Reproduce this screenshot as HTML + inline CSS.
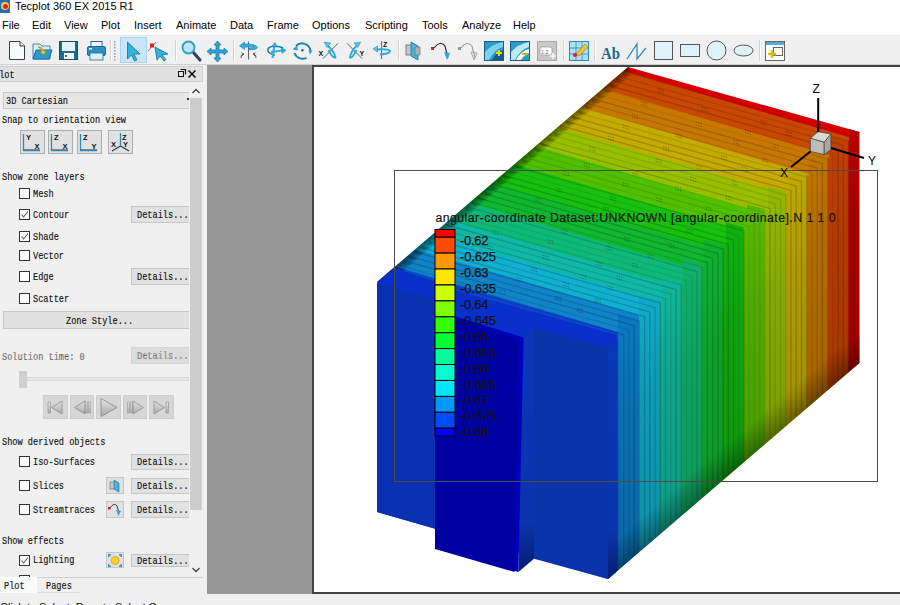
<!DOCTYPE html>
<html><head><meta charset="utf-8">
<style>
*{margin:0;padding:0;box-sizing:border-box}
html,body{width:900px;height:605px;overflow:hidden;background:#f0f0f0;font-family:"Liberation Sans",sans-serif;position:relative}
.a{position:absolute}
#title{left:0;top:0;width:900px;height:15px;background:#fff}
#menu{left:0;top:15px;width:900px;height:20px;background:#fff}
.mi{position:absolute;top:19px;font-size:11px;color:#000;line-height:12px;white-space:pre}
#tb{left:0;top:35px;width:900px;height:30px;background:#f0f0f0;border-top:1px solid #e6e6e6}
#tbline{left:0;top:64px;width:900px;height:1px;background:#d0d0d0}
#gray{left:207px;top:65px;width:106px;height:529px;background:#979797}
#frame{left:312px;top:65px;width:600px;height:529px;background:#fff;border:2px solid #444}
.pt{position:absolute;font-family:"Liberation Mono",monospace;font-size:10.5px;line-height:12px;color:#111;white-space:pre;transform:scaleX(0.82);transform-origin:0 0;-webkit-text-stroke:0.15px #111}
.cb{position:absolute;left:19px;width:11px;height:11px;border:1px solid #333;background:#fff}
.btn{position:absolute;background:#e1e1e1;border:1px solid #c4c4c4}
.det{position:absolute;left:131px;width:60px;height:17px;background:#e1e1e1;border:1px solid #c8c8c8}
.det span{position:absolute;left:5px;top:3px}
</style></head><body>
<div id="title" class="a"></div>
<div class="a" style="left:0;top:0;width:10px;height:13px;background:#2a6bb5"></div>
<div class="a" style="left:1px;top:2px;width:8px;height:8px;border-radius:50%;background:#f5d040"></div>
<div class="a" style="left:3px;top:4px;width:5px;height:5px;border-radius:50%;background:#e02020"></div>
<div class="mi" style="left:15px;top:0px;font-size:11px">Tecplot 360 EX 2015 R1</div>
<div id="menu" class="a"></div>
<div class="mi" style="left:2px">File</div>
<div class="mi" style="left:32px">Edit</div>
<div class="mi" style="left:64px">View</div>
<div class="mi" style="left:101px">Plot</div>
<div class="mi" style="left:134px">Insert</div>
<div class="mi" style="left:176px">Animate</div>
<div class="mi" style="left:230px">Data</div>
<div class="mi" style="left:267px">Frame</div>
<div class="mi" style="left:312px">Options</div>
<div class="mi" style="left:365px">Scripting</div>
<div class="mi" style="left:422px">Tools</div>
<div class="mi" style="left:462px">Analyze</div>
<div class="mi" style="left:513px">Help</div>
<div id="tb" class="a"></div>
<div id="tbline" class="a"></div>
<!-- TOOLBAR ICONS -->
<svg class="a" style="left:0;top:0" width="900" height="65" viewBox="0 0 900 65"><path d="M9.5 41.5 H20 L24.5 46 V59.5 H9.5 Z" fill="#f7fbfd" stroke="#3c3c3c"/><path d="M20 41.5 V46 H24.5" fill="#e6e6e6" stroke="#3c3c3c"/>
<path d="M33 44 H40 L42 46 H50 V59 H33 Z" fill="#d9eef7" stroke="#3d8ab8"/><path d="M33 59 L36 50 H52 L49 59 Z" fill="#2f9ad0" stroke="#1d6c9c"/><path d="M38 47 Q42 46 44 51 L46 50 L44 55 L40 52 L42 51 Q41 48 38 47 Z" fill="#f3c726" stroke="#a08010" stroke-width="0.6"/>
<rect x="59.5" y="41.5" width="18" height="18" fill="#1c6b94" stroke="#134e6e"/><rect x="62" y="42" width="13" height="9" fill="#e6f4f8"/><rect x="64" y="53" width="10" height="6" fill="#fff"/><rect x="65" y="55" width="2" height="2" fill="#1c6b94"/>
<rect x="91" y="41.5" width="11" height="6" fill="#fff" stroke="#1c6b94"/><rect x="87.5" y="46.5" width="18" height="9" rx="1.5" fill="#2a8fc4" stroke="#1c6b94"/><rect x="90" y="53" width="13" height="7" fill="#dfeef3" stroke="#1c6b94" stroke-width="0.8"/><rect x="89" y="48" width="3" height="1.5" fill="#fff"/>
<line x1="110.5" y1="40" x2="110.5" y2="61" stroke="#d4d4d4"/><line x1="111.5" y1="40" x2="111.5" y2="61" stroke="#fff"/>
<rect x="114" y="41" width="1.5" height="1.5" fill="#9a9a9a"/>
<rect x="114" y="44" width="1.5" height="1.5" fill="#9a9a9a"/>
<rect x="114" y="47" width="1.5" height="1.5" fill="#9a9a9a"/>
<rect x="114" y="50" width="1.5" height="1.5" fill="#9a9a9a"/>
<rect x="114" y="53" width="1.5" height="1.5" fill="#9a9a9a"/>
<rect x="114" y="56" width="1.5" height="1.5" fill="#9a9a9a"/>
<rect x="114" y="59" width="1.5" height="1.5" fill="#9a9a9a"/>
<rect x="120.5" y="37.5" width="26" height="25" fill="#cce4f7" stroke="#a8d2f4"/>
<path d="M127.5 42 L127.5 59 L131.5 55 L134.5 61 L137 60 L134 54 L140 54 Z" fill="#2fb4dc" stroke="#1d6f8e" stroke-width="0.8"/>
<line x1="148" y1="51" x2="156" y2="42" stroke="#555" stroke-width="0.8"/><rect x="150" y="43.5" width="4" height="4" fill="#e02020"/>
<path d="M155 47 L157 60 L160 56 L164 61 L166 59.5 L162 55 L168 54 Z" fill="#2fb4dc" stroke="#1d6f8e" stroke-width="0.8"/>
<line x1="175.5" y1="40" x2="175.5" y2="61" stroke="#d4d4d4"/><line x1="176.5" y1="40" x2="176.5" y2="61" stroke="#fff"/>
<line x1="193" y1="52" x2="200" y2="60" stroke="#2c4060" stroke-width="3" stroke-linecap="round"/><circle cx="188.5" cy="47.5" r="6" fill="#bfe8f6" stroke="#2a9ccc" stroke-width="1.8"/>
<path d="M217.5 41 L221 45 H219 V50 H224 V48 L228 51.5 L224 55 V53 H219 V58 H221 L217.5 62 L214 58 H216 V53 H211 V55 L207 51.5 L211 48 V50 H216 V45 H214 Z" fill="#2aa8d8" stroke="#1a6c92" stroke-width="0.7"/>
<line x1="233.5" y1="40" x2="233.5" y2="61" stroke="#d4d4d4"/><line x1="234.5" y1="40" x2="234.5" y2="61" stroke="#fff"/>
<line x1="248.5" y1="41.5" x2="248.5" y2="59.5" stroke="#666" stroke-width="1.1"/>
<path d="M239.5 45.8 L244.5 42 V44 Q255 43.5 257.5 47.2 Q257 50 249 49.8 V48 Q254 47.8 254.3 47 Q252 46.3 244.5 47.2 V49.5 Z" fill="#34b0e0" stroke="#1d7fae" stroke-width="0.6"/>
<path d="M241 58 Q240.5 55 243.5 54 M241.5 52.8 L243.8 54 L242 55.8 M256 58 Q256.5 55 253.5 54 M255.5 52.8 L253.2 54 L255 55.8" fill="none" stroke="#333" stroke-width="0.9"/>
<path d="M283 48 Q279 45.5 272 46.5 Q267 47.5 268 51 Q269 54 275 55" fill="none" stroke="#1d7fae" stroke-width="1.6"/>
<path d="M272.5 58 L274.5 46" stroke="#34b0e0" stroke-width="2.2"/><path d="M271.8 46.5 L275 42.5 L277.3 47 Z" fill="#34b0e0" stroke="#1d7fae" stroke-width="0.5"/>
<path d="M271 52 L282 50.5" stroke="#34b0e0" stroke-width="2.2"/><path d="M281.5 47.5 L286 50.3 L282 53.5 Z" fill="#34b0e0" stroke="#1d7fae" stroke-width="0.5"/>
<path d="M296 46 A8.5 8.5 0 0 1 310.5 50.5 M306.5 57.8 A8.5 8.5 0 0 1 294.5 53" fill="none" stroke="#1d7fae" stroke-width="1.9"/>
<path d="M292.5 49.5 L297 45.5 L298 50.5 Z M308.5 50 L312.5 50.5 L310 54.5 Z" fill="#2aa0d0"/>
<circle cx="302.4" cy="50.2" r="1.2" fill="#1d5f80"/>
<line x1="323" y1="58.5" x2="338" y2="43.3" stroke="#555" stroke-width="0.9"/>
<path d="M328 46 Q334 51 335.5 57.5 Q334 58.5 331 54.5 Q329.5 52 328.5 50" fill="none" stroke="#2aa8d8" stroke-width="1.8"/><path d="M324.2 42.2 L330.8 43 L327 47.5 Z" fill="#5cc4ec" stroke="#1d7fae" stroke-width="0.5"/>
<text x="318.5" y="55.5" font-family="Liberation Sans" font-weight="bold" font-size="7" fill="#111">X</text>
<line x1="347" y1="43.3" x2="362" y2="58.5" stroke="#555" stroke-width="0.9"/>
<path d="M356.5 46 Q351 51 350 57.5 Q351.5 58.5 354 54.5 Q355.5 52 356.5 50" fill="none" stroke="#2aa8d8" stroke-width="1.8"/><path d="M360.6 42.2 L354 43 L357.8 47.5 Z" fill="#5cc4ec" stroke="#1d7fae" stroke-width="0.5"/>
<text x="359.5" y="55.5" font-family="Liberation Sans" font-weight="bold" font-size="7" fill="#111">Y</text>
<line x1="381.6" y1="41" x2="381.6" y2="59" stroke="#666" stroke-width="1"/>
<path d="M376.5 49.5 Q388 48.5 390 51 Q389.5 54 380 54.5" fill="none" stroke="#2aa8d8" stroke-width="1.9"/><path d="M373 48.8 L377.5 45.8 L377.5 52 Z" fill="#5cc4ec" stroke="#1d7fae" stroke-width="0.5"/>
<text x="383" y="47" font-family="Liberation Sans" font-weight="bold" font-size="7" fill="#111">Z</text>
<line x1="398.5" y1="40" x2="398.5" y2="61" stroke="#d4d4d4"/><line x1="399.5" y1="40" x2="399.5" y2="61" stroke="#fff"/>
<rect x="406" y="45" width="8" height="10" fill="#c8c8c8" stroke="#666" stroke-width="0.8"/><path d="M411 42 L418 46 V60 L411 56 Z" fill="#49b3e0" stroke="#1a6c92" stroke-width="0.8"/><rect x="415" y="47" width="5" height="8" fill="#b0b0b0" stroke="#666" stroke-width="0.6"/>
<rect x="431" y="47" width="3" height="3" fill="#e02020"/><path d="M434 48 Q440 40 445 46 L448 58" fill="none" stroke="#333" stroke-width="1.2"/><path d="M444 52 L450 53 L447 60 Z" fill="#2aa8d8"/>
<rect x="458" y="47" width="3" height="3" fill="#999"/><path d="M461 48 Q467 40 472 46 L475 58" fill="none" stroke="#999" stroke-width="1.1"/><path d="M471 52 L477 53 L474 60 Z" fill="none" stroke="#aaa"/>
<rect x="484.5" y="41.5" width="19" height="19" fill="#2a9ccc" stroke="#1a5c82"/><path d="M485 52 Q492 44 503 42 V47 Q495 49 489 60 H485 Z" fill="#7fd0ee"/><path d="M492 60 Q496 52 503 50 V60 Z" fill="#0d5f8a"/><path d="M496 53 H502 M499 50 V56" stroke="#f4d000" stroke-width="2"/>
<rect x="510.5" y="41.5" width="19" height="19" fill="#2a9ccc" stroke="#1a5c82"/><path d="M511 52 Q518 44 529 42 V47 Q521 49 515 60 H511 Z" fill="#bfe8f6"/><path d="M516 60 Q522 50 529 49 V53 Q524 55 521 60 Z" fill="#fff"/><path d="M522 54 H528" stroke="#c4c000" stroke-width="2"/>
<rect x="537.5" y="41.5" width="19" height="19" fill="#c8c8c8" stroke="#a8a8a8"/><rect x="540" y="47" width="12" height="8" rx="2" fill="#fff" stroke="#888" stroke-width="0.6"/><text x="541" y="53.5" font-family="Liberation Sans" font-size="5.5" fill="#777">1.2</text><path d="M550 56 H556 M553 53 V59" stroke="#eee" stroke-width="2"/>
<line x1="563.5" y1="40" x2="563.5" y2="61" stroke="#d4d4d4"/><line x1="564.5" y1="40" x2="564.5" y2="61" stroke="#fff"/>
<rect x="569.5" y="41.5" width="19" height="19" fill="#aee0f5" stroke="#2a8cbc"/><path d="M569.5 48 H588.5 M569.5 54 H588.5 M576 41.5 V60.5 M582 41.5 V60.5" stroke="#2a8cbc" stroke-width="0.8"/><path d="M576 54 L585 44 L588 47 L579 56 Z" fill="#f3c726" stroke="#a08010" stroke-width="0.6"/><circle cx="575" cy="55" r="2" fill="#e02020"/>
<line x1="594.5" y1="40" x2="594.5" y2="61" stroke="#d4d4d4"/><line x1="595.5" y1="40" x2="595.5" y2="61" stroke="#fff"/>
<text x="601" y="59" font-family="Liberation Serif" font-weight="bold" font-size="17" fill="#1e6a8a" textLength="19" lengthAdjust="spacingAndGlyphs">Ab</text>
<path d="M627 59 L637 44 V59 L646 48" fill="none" stroke="#2a8cbc" stroke-width="1.3"/>
<rect x="654.5" y="41.5" width="18" height="18" fill="#dff1fa" stroke="#555"/>
<rect x="680.5" y="44.5" width="19" height="12" fill="#dff1fa" stroke="#555"/>
<circle cx="716.5" cy="50.5" r="9.5" fill="#dff1fa" stroke="#555"/>
<ellipse cx="743.5" cy="50.5" rx="9.5" ry="5.5" fill="#dff1fa" stroke="#555"/>
<line x1="759.5" y1="40" x2="759.5" y2="61" stroke="#d4d4d4"/><line x1="760.5" y1="40" x2="760.5" y2="61" stroke="#fff"/>
<rect x="765.5" y="41.5" width="19" height="19" fill="#fff" stroke="#666"/><rect x="766" y="42" width="18" height="3" fill="#5aa8d8"/><rect x="773.5" y="47.5" width="9" height="8" fill="#fff" stroke="#666"/><path d="M768 54 H776 M772 50 V58" stroke="#f4d000" stroke-width="2.4"/><path d="M768 54 H776 M772 50 V58" stroke="#a08010" stroke-width="0.5" fill="none"/></svg>
<!-- LEFT PANEL -->
<div class="a" style="left:0px;top:65px;width:207px;height:528px;background:#f0f0f0"></div>
<div class="a" style="left:0px;top:66px;width:203px;height:16px;background:#e1e1e1;border:1px solid #cfcfcf;border-left:none"></div>
<div class="pt" style="left:-6px;top:68.5px;color:#111;">Plot</div>
<svg class="a" style="left:174px;top:68px" width="24" height="12"><rect x="4.5" y="3.5" width="5" height="5" fill="none" stroke="#111"/><path d="M6.5 1.5 H11.5 V6.5" fill="none" stroke="#111" stroke-width="1.2"/><path d="M14.5 2.5 L21.5 9.5 M21.5 2.5 L14.5 9.5" stroke="#111" stroke-width="1.6"/></svg>
<div class="a" style="left:3px;top:92px;width:186px;height:17px;background:#e6e6e6;border:1px solid #cacaca;border-right:none"></div>
<div class="pt" style="left:6px;top:95.0px;color:#111;">3D Cartesian</div>
<div class="a" style="left:187px;top:98px;width:2px;height:2px;background:#333"></div>
<div class="a" style="left:189px;top:82px;width:14px;height:495px;background:#f0f0f0"></div>
<div class="a" style="left:190px;top:98px;width:12px;height:412px;background:#cdcdcd"></div>
<svg class="a" style="left:190px;top:86px" width="12" height="10"><path d="M2.5 7 L6 3.5 L9.5 7" fill="none" stroke="#444" stroke-width="1.4"/></svg>
<svg class="a" style="left:190px;top:565px" width="12" height="10"><path d="M2.5 3 L6 6.5 L9.5 3" fill="none" stroke="#444" stroke-width="1.3"/></svg>
<div class="pt" style="left:2px;top:113.5px;color:#111;">Snap to orientation view</div>
<div class="a" style="left:20px;top:130px;width:25px;height:24px;background:#e1e1e1;border:1px solid #adadad"></div>
<svg class="a" style="left:20px;top:130px" width="25" height="24"><path d="M3.5 4 V20.5 H20" fill="none" stroke="#2a8cbc" stroke-width="1.3"/><path d="M3.5 19.5 H20" stroke="#555" stroke-width="0.6"/><text x="6" y="10" font-family="Liberation Sans" font-weight="bold" font-size="7.5" fill="#111">Y</text><text x="14.5" y="19" font-family="Liberation Sans" font-weight="bold" font-size="7.5" fill="#111">X</text></svg>
<div class="a" style="left:48px;top:130px;width:25px;height:24px;background:#e1e1e1;border:1px solid #adadad"></div>
<svg class="a" style="left:48px;top:130px" width="25" height="24"><path d="M3.5 4 V20.5 H20" fill="none" stroke="#2a8cbc" stroke-width="1.3"/><path d="M3.5 19.5 H20" stroke="#555" stroke-width="0.6"/><text x="6" y="10" font-family="Liberation Sans" font-weight="bold" font-size="7.5" fill="#111">Z</text><text x="14.5" y="19" font-family="Liberation Sans" font-weight="bold" font-size="7.5" fill="#111">X</text></svg>
<div class="a" style="left:76.5px;top:130px;width:25px;height:24px;background:#e1e1e1;border:1px solid #adadad"></div>
<svg class="a" style="left:76.5px;top:130px" width="25" height="24"><path d="M3.5 4 V20.5 H20" fill="none" stroke="#2a8cbc" stroke-width="1.3"/><path d="M3.5 19.5 H20" stroke="#555" stroke-width="0.6"/><text x="6" y="10" font-family="Liberation Sans" font-weight="bold" font-size="7.5" fill="#111">Z</text><text x="14.5" y="19" font-family="Liberation Sans" font-weight="bold" font-size="7.5" fill="#111">Y</text></svg>
<div class="a" style="left:108px;top:130px;width:25px;height:24px;background:#e1e1e1;border:1px solid #adadad"></div>
<svg class="a" style="left:108px;top:130px" width="25" height="24"><path d="M12.5 3 V16 M12.5 16 L4 21 M12.5 16 L21 21" fill="none" stroke="#333" stroke-width="1.1"/><path d="M12.5 3 V16" stroke="#2a8cbc" stroke-width="1.2"/><text x="14" y="10" font-family="Liberation Sans" font-weight="bold" font-size="7.5" fill="#111">Z</text><text x="3" y="17" font-family="Liberation Sans" font-weight="bold" font-size="7.5" fill="#111">X</text><text x="15" y="17" font-family="Liberation Sans" font-weight="bold" font-size="7.5" fill="#111">Y</text></svg>
<div class="pt" style="left:2px;top:171.0px;color:#111;">Show zone layers</div>
<div class="cb" style="top:188px"></div>
<div class="pt" style="left:33px;top:188.0px;color:#111;">Mesh</div>
<div class="cb" style="top:209px"></div>
<svg class="a" style="left:19px;top:209px" width="11" height="11"><path d="M2.5 5.5 L4.5 8 L9 2.5" fill="none" stroke="#555" stroke-width="1.1"/></svg>
<div class="pt" style="left:33px;top:209.0px;color:#111;">Contour</div>
<div class="a" style="left:131px;top:206px;width:58px;height:17px;background:#e1e1e1;border:1px solid #c6c6c6;border-right:none"></div>
<div class="pt" style="left:137px;top:209.0px;color:#111;">Details...</div>
<div class="cb" style="top:230.5px"></div>
<svg class="a" style="left:19px;top:230.5px" width="11" height="11"><path d="M2.5 5.5 L4.5 8 L9 2.5" fill="none" stroke="#555" stroke-width="1.1"/></svg>
<div class="pt" style="left:33px;top:230.5px;color:#111;">Shade</div>
<div class="cb" style="top:249.5px"></div>
<div class="pt" style="left:33px;top:249.5px;color:#111;">Vector</div>
<div class="cb" style="top:271px"></div>
<div class="pt" style="left:33px;top:271.0px;color:#111;">Edge</div>
<div class="a" style="left:131px;top:268px;width:58px;height:17px;background:#e1e1e1;border:1px solid #c6c6c6;border-right:none"></div>
<div class="pt" style="left:137px;top:271.0px;color:#111;">Details...</div>
<div class="cb" style="top:292.5px"></div>
<div class="pt" style="left:33px;top:292.5px;color:#111;">Scatter</div>
<div class="a" style="left:3px;top:311px;width:186px;height:18px;background:#e1e1e1;border:1px solid #c6c6c6;border-right:none"></div>
<div class="pt" style="left:66px;top:314.5px;color:#111;">Zone Style...</div>
<div class="pt" style="left:2px;top:350.5px;color:#8a8a8a;">Solution time: 0</div>
<div class="a" style="left:131px;top:346.5px;width:58px;height:17px;background:#dcdcdc;border:1px solid #d6d6d6;border-right:none"></div>
<div class="pt" style="left:137px;top:349.5px;color:#a0a0a0;">Details...</div>
<div class="a" style="left:27px;top:377px;width:162px;height:4px;background:#e8e8e8;border:1px solid #d8d8d8"></div>
<div class="a" style="left:19px;top:370.5px;width:8px;height:17.5px;background:#d0d0d0"></div>
<div class="a" style="left:43px;top:395px;width:24.5px;height:24px;background:#d6d6d6;border:1px solid #cdcdcd"></div>
<svg class="a" style="left:43px;top:395px" width="25" height="24"><defs><linearGradient id="mg" x1="0" y1="0" x2="0" y2="1"><stop offset="0" stop-color="#e4e4e4"/><stop offset="1" stop-color="#a8a8a8"/></linearGradient></defs><path d="M5 7 H7.5 V18 H5 Z" fill="url(#mg)" stroke="#9a9a9a" stroke-width="0.7"/><path d="M19 6 L8.5 12.5 L19 19 Z" fill="url(#mg)" stroke="#8e8e8e" stroke-width="0.8"/></svg>
<div class="a" style="left:69.5px;top:395px;width:24.5px;height:24px;background:#d6d6d6;border:1px solid #cdcdcd"></div>
<svg class="a" style="left:69.5px;top:395px" width="25" height="24"><defs><linearGradient id="mg" x1="0" y1="0" x2="0" y2="1"><stop offset="0" stop-color="#e4e4e4"/><stop offset="1" stop-color="#a8a8a8"/></linearGradient></defs><path d="M15 6 L4.5 12.5 L15 19 Z" fill="url(#mg)" stroke="#8e8e8e" stroke-width="0.8"/><path d="M15.5 7 H17.5 V18 H15.5 Z M18.5 7 H20.5 V18 H18.5 Z" fill="url(#mg)" stroke="#9a9a9a" stroke-width="0.6"/></svg>
<div class="a" style="left:96px;top:395px;width:24.5px;height:24px;background:#d6d6d6;border:1px solid #cdcdcd"></div>
<svg class="a" style="left:96px;top:395px" width="25" height="24"><defs><linearGradient id="mg" x1="0" y1="0" x2="0" y2="1"><stop offset="0" stop-color="#e4e4e4"/><stop offset="1" stop-color="#a8a8a8"/></linearGradient></defs><path d="M5 3.5 L21 12.5 L5 21.5 Z" fill="url(#mg)" stroke="#8e8e8e" stroke-width="0.9"/></svg>
<div class="a" style="left:122.5px;top:395px;width:24.5px;height:24px;background:#d6d6d6;border:1px solid #cdcdcd"></div>
<svg class="a" style="left:122.5px;top:395px" width="25" height="24"><defs><linearGradient id="mg" x1="0" y1="0" x2="0" y2="1"><stop offset="0" stop-color="#e4e4e4"/><stop offset="1" stop-color="#a8a8a8"/></linearGradient></defs><path d="M4.5 7 H6.5 V18 H4.5 Z M7.5 7 H9.5 V18 H7.5 Z" fill="url(#mg)" stroke="#9a9a9a" stroke-width="0.6"/><path d="M10 6 L20.5 12.5 L10 19 Z" fill="url(#mg)" stroke="#8e8e8e" stroke-width="0.8"/></svg>
<div class="a" style="left:149px;top:395px;width:24.5px;height:24px;background:#d6d6d6;border:1px solid #cdcdcd"></div>
<svg class="a" style="left:149px;top:395px" width="25" height="24"><defs><linearGradient id="mg" x1="0" y1="0" x2="0" y2="1"><stop offset="0" stop-color="#e4e4e4"/><stop offset="1" stop-color="#a8a8a8"/></linearGradient></defs><path d="M5 6 L15.5 12.5 L5 19 Z" fill="url(#mg)" stroke="#8e8e8e" stroke-width="0.8"/><path d="M17 7 H19.5 V18 H17 Z" fill="url(#mg)" stroke="#9a9a9a" stroke-width="0.7"/></svg>
<div class="pt" style="left:2px;top:436.0px;color:#111;">Show derived objects</div>
<div class="cb" style="top:455.5px"></div>
<div class="pt" style="left:33px;top:455.5px;color:#111;">Iso-Surfaces</div>
<div class="a" style="left:131px;top:453.5px;width:58px;height:16px;background:#e1e1e1;border:1px solid #c6c6c6;border-right:none"></div>
<div class="pt" style="left:137px;top:456.0px;color:#111;">Details...</div>
<div class="cb" style="top:479.5px"></div>
<div class="pt" style="left:33px;top:479.5px;color:#111;">Slices</div>
<div class="a" style="left:131px;top:477.5px;width:58px;height:16px;background:#e1e1e1;border:1px solid #c6c6c6;border-right:none"></div>
<div class="pt" style="left:137px;top:480.0px;color:#111;">Details...</div>
<div class="a" style="left:106px;top:477px;width:18px;height:16.5px;background:#e1e1e1;border:1px solid #c6c6c6"></div>
<svg class="a" style="left:106px;top:477px" width="18" height="17"><rect x="4" y="5" width="6" height="7" fill="#c8c8c8" stroke="#666" stroke-width="0.6"/><path d="M8 3 L13 6 V15 L8 12 Z" fill="#49b3e0" stroke="#1a6c92" stroke-width="0.6"/></svg>
<div class="cb" style="top:503.5px"></div>
<div class="pt" style="left:33px;top:503.5px;color:#111;">Streamtraces</div>
<div class="a" style="left:131px;top:501px;width:58px;height:16.5px;background:#e1e1e1;border:1px solid #c6c6c6;border-right:none"></div>
<div class="pt" style="left:137px;top:503.75px;color:#111;">Details...</div>
<div class="a" style="left:106px;top:501px;width:18px;height:16.5px;background:#e1e1e1;border:1px solid #c6c6c6"></div>
<svg class="a" style="left:106px;top:501px" width="18" height="17"><rect x="2" y="6" width="2.5" height="2.5" fill="#e02020"/><path d="M4 7 Q8 1 11 5 L13 12" fill="none" stroke="#333" stroke-width="0.9"/><path d="M10 9 L15 10 L12.5 15 Z" fill="#2aa8d8"/></svg>
<div class="pt" style="left:2px;top:534.5px;color:#111;">Show effects</div>
<div class="cb" style="top:554.5px"></div>
<svg class="a" style="left:19px;top:554.5px" width="11" height="11"><path d="M2.5 5.5 L4.5 8 L9 2.5" fill="none" stroke="#555" stroke-width="1.1"/></svg>
<div class="pt" style="left:33px;top:554.0px;color:#111;">Lighting</div>
<div class="a" style="left:131px;top:554px;width:58px;height:12.5px;background:#e1e1e1;border:1px solid #c6c6c6;border-right:none"></div>
<div class="pt" style="left:137px;top:554.75px;color:#111;">Details...</div>
<div class="a" style="left:106px;top:551.5px;width:18px;height:16.5px;background:#e1e1e1;border:1px solid #c6c6c6"></div>
<svg class="a" style="left:106px;top:551.5px" width="18" height="17"><circle cx="9" cy="8.5" r="4" fill="#f6d030" stroke="#e0a010" stroke-width="0.8"/><path d="M2 2 H5 V3.5 H3.5 V5 H2 Z M16 2 H13 V3.5 H14.5 V5 H16 Z M2 15 H5 V13.5 H3.5 V12 H2 Z M16 15 H13 V13.5 H14.5 V12 H16 Z" fill="#2a9ccc"/></svg>
<div class="a" style="left:19px;top:575px;width:11px;height:2px;border:1px solid #333;border-bottom:none;background:#fff"></div>
<div class="a" style="left:0px;top:577px;width:203px;height:1px;background:#cfcfcf"></div>
<div class="a" style="left:0px;top:577px;width:37px;height:16px;background:#fbfbfb"></div>
<div class="pt" style="left:4px;top:580.0px;color:#111;">Plot</div>
<div class="pt" style="left:46px;top:579.5px;color:#111;">Pages</div>
<div class="a" style="left:37px;top:592px;width:43px;height:1px;background:#d8d8d8"></div>
<div class="a" style="left:0;top:600.5px;font-size:11px;color:#111;white-space:pre;line-height:12px">Click to Select; Drag to Select G</div>
<div id="gray" class="a"></div>
<div id="frame" class="a"></div>
<!-- PLOT -->
<svg id="plot" class="a" style="left:0;top:0" width="900" height="605" viewBox="0 0 900 605">
<defs>
<linearGradient id="gt" gradientUnits="userSpaceOnUse" x1="628" y1="67" x2="549.6" y2="333.7"><stop offset="0" stop-color="#d40000"/><stop offset="0.016" stop-color="#d40000"/><stop offset="0.02" stop-color="#c84800"/><stop offset="0.098" stop-color="#c84800"/><stop offset="0.102" stop-color="#c87800"/><stop offset="0.184" stop-color="#c87800"/><stop offset="0.188" stop-color="#c4ac00"/><stop offset="0.278" stop-color="#c4ac00"/><stop offset="0.282" stop-color="#98c000"/><stop offset="0.365" stop-color="#98c000"/><stop offset="0.369" stop-color="#50c000"/><stop offset="0.448" stop-color="#50c000"/><stop offset="0.452" stop-color="#18c010"/><stop offset="0.538" stop-color="#18c010"/><stop offset="0.542" stop-color="#10b830"/><stop offset="0.628" stop-color="#10b830"/><stop offset="0.632" stop-color="#10b878"/><stop offset="0.708" stop-color="#10b878"/><stop offset="0.712" stop-color="#10b8a8"/><stop offset="0.778" stop-color="#10b8a8"/><stop offset="0.782" stop-color="#10b0d0"/><stop offset="0.843" stop-color="#10b0d0"/><stop offset="0.847" stop-color="#1084c8"/><stop offset="0.923" stop-color="#1084c8"/><stop offset="0.927" stop-color="#0a48cc"/><stop offset="1" stop-color="#0a48cc"/></linearGradient>
<linearGradient id="gr" gradientUnits="userSpaceOnUse" x1="859" y1="0" x2="608" y2="0"><stop offset="0" stop-color="#b80000"/><stop offset="0.0397" stop-color="#b80000"/><stop offset="0.0437" stop-color="#c04000"/><stop offset="0.1232" stop-color="#c04000"/><stop offset="0.1272" stop-color="#c07400"/><stop offset="0.2067" stop-color="#c07400"/><stop offset="0.2107" stop-color="#bca800"/><stop offset="0.2902" stop-color="#bca800"/><stop offset="0.2942" stop-color="#90b800"/><stop offset="0.3737" stop-color="#90b800"/><stop offset="0.3777" stop-color="#58b800"/><stop offset="0.4572" stop-color="#58b800"/><stop offset="0.4612" stop-color="#10b010"/><stop offset="0.5407" stop-color="#10b010"/><stop offset="0.5447" stop-color="#10b030"/><stop offset="0.6242" stop-color="#10b030"/><stop offset="0.6282" stop-color="#10b068"/><stop offset="0.7077" stop-color="#10b068"/><stop offset="0.7117" stop-color="#10b498"/><stop offset="0.7912" stop-color="#10b498"/><stop offset="0.7952" stop-color="#10a8c4"/><stop offset="0.8747" stop-color="#10a8c4"/><stop offset="0.8787" stop-color="#0a78c0"/><stop offset="0.9582" stop-color="#0a78c0"/><stop offset="0.9622" stop-color="#0a40c0"/><stop offset="1" stop-color="#0a40c0"/></linearGradient>
<linearGradient id="gshade" x1="0" y1="0" x2="0" y2="1"><stop offset="0" stop-color="#000" stop-opacity="0"/><stop offset="0.7" stop-color="#000" stop-opacity="0"/><stop offset="1" stop-color="#000" stop-opacity="0.35"/></linearGradient>
<clipPath id="fc"><rect x="314" y="66" width="586" height="526"/></clipPath>
</defs>
<g clip-path="url(#fc)">
<polygon points="628.0,67.0 859.5,132.0 608.0,347.0 377.0,282.0" fill="url(#gt)"/>
<linearGradient id="gbev" gradientUnits="userSpaceOnUse" x1="628" y1="67" x2="633.9" y2="73.8"><stop offset="0" stop-color="#000" stop-opacity="0.45"/><stop offset="1" stop-color="#000" stop-opacity="0"/></linearGradient>
<polygon points="628.0,67.0 633.9,73.8 382.9,288.8 377.0,282.0" fill="url(#gbev)"/>
<polygon points="621.7,72.4 631.7,75.2 624.2,76.9" fill="#000" fill-opacity="0.18"/>
<polygon points="615.5,77.8 625.5,80.6 618.0,82.3" fill="#000" fill-opacity="0.18"/>
<polygon points="609.2,83.2 619.2,86.0 611.7,87.7" fill="#000" fill-opacity="0.18"/>
<polygon points="602.9,88.6 612.9,91.4 605.4,93.1" fill="#000" fill-opacity="0.18"/>
<polygon points="596.6,94.0 606.6,96.8 599.1,98.5" fill="#000" fill-opacity="0.18"/>
<polygon points="590.4,99.4 600.4,102.2 592.9,103.9" fill="#000" fill-opacity="0.18"/>
<polygon points="584.1,104.8 594.1,107.6 586.6,109.3" fill="#000" fill-opacity="0.18"/>
<polygon points="577.8,110.2 587.8,113.0 580.3,114.7" fill="#000" fill-opacity="0.18"/>
<polygon points="571.5,115.6 581.5,118.4 574.0,120.1" fill="#000" fill-opacity="0.18"/>
<polygon points="565.2,121.0 575.2,123.8 567.8,125.5" fill="#000" fill-opacity="0.18"/>
<polygon points="559.0,126.4 569.0,129.2 561.5,130.9" fill="#000" fill-opacity="0.18"/>
<polygon points="552.7,131.8 562.7,134.6 555.2,136.3" fill="#000" fill-opacity="0.18"/>
<polygon points="546.4,137.2 556.4,140.0 548.9,141.7" fill="#000" fill-opacity="0.18"/>
<polygon points="540.1,142.6 550.1,145.4 542.6,147.1" fill="#000" fill-opacity="0.18"/>
<polygon points="533.9,148.0 543.9,150.8 536.4,152.5" fill="#000" fill-opacity="0.18"/>
<polygon points="527.6,153.4 537.6,156.2 530.1,157.9" fill="#000" fill-opacity="0.18"/>
<polygon points="521.3,158.8 531.3,161.6 523.8,163.3" fill="#000" fill-opacity="0.18"/>
<polygon points="515.0,164.2 525.0,167.0 517.5,168.7" fill="#000" fill-opacity="0.18"/>
<polygon points="508.8,169.6 518.8,172.4 511.3,174.1" fill="#000" fill-opacity="0.18"/>
<polygon points="502.5,175.0 512.5,177.8 505.0,179.5" fill="#000" fill-opacity="0.18"/>
<polygon points="496.2,180.4 506.2,183.2 498.7,184.9" fill="#000" fill-opacity="0.18"/>
<polygon points="489.9,185.8 499.9,188.6 492.4,190.3" fill="#000" fill-opacity="0.18"/>
<polygon points="483.7,191.2 493.7,194.0 486.2,195.7" fill="#000" fill-opacity="0.18"/>
<polygon points="477.4,196.6 487.4,199.4 479.9,201.1" fill="#000" fill-opacity="0.18"/>
<polygon points="471.1,202.0 481.1,204.8 473.6,206.5" fill="#000" fill-opacity="0.18"/>
<polygon points="464.9,207.4 474.9,210.2 467.4,211.9" fill="#000" fill-opacity="0.18"/>
<polygon points="458.6,212.8 468.6,215.6 461.1,217.3" fill="#000" fill-opacity="0.18"/>
<polygon points="452.3,218.2 462.3,221.0 454.8,222.7" fill="#000" fill-opacity="0.18"/>
<polygon points="446.0,223.6 456.0,226.4 448.5,228.1" fill="#000" fill-opacity="0.18"/>
<polygon points="439.8,229.0 449.8,231.8 442.2,233.5" fill="#000" fill-opacity="0.18"/>
<polygon points="433.5,234.4 443.5,237.2 436.0,238.9" fill="#000" fill-opacity="0.18"/>
<polygon points="427.2,239.8 437.2,242.6 429.7,244.3" fill="#000" fill-opacity="0.18"/>
<polygon points="420.9,245.2 430.9,248.0 423.4,249.7" fill="#000" fill-opacity="0.18"/>
<polygon points="414.6,250.6 424.6,253.4 417.1,255.1" fill="#000" fill-opacity="0.18"/>
<polygon points="408.4,256.0 418.4,258.8 410.9,260.5" fill="#000" fill-opacity="0.18"/>
<polygon points="402.1,261.4 412.1,264.2 404.6,265.9" fill="#000" fill-opacity="0.18"/>
<polygon points="395.8,266.8 405.8,269.6 398.3,271.3" fill="#000" fill-opacity="0.18"/>
<polygon points="389.6,272.2 399.6,275.0 392.1,276.7" fill="#000" fill-opacity="0.18"/>
<polygon points="383.3,277.6 393.3,280.4 385.8,282.1" fill="#000" fill-opacity="0.18"/>
<polygon points="859.5,132.0 849.0,129.0 849.0,141.0 829.5,135.5 829.5,157.6 808.5,151.7 808.5,175.6 789.0,170.1 789.0,192.3 768.0,186.4 768.0,210.2 747.0,204.3 747.0,228.2 726.0,222.3 726.0,246.1 703.5,239.8 703.5,265.4 682.5,259.5 682.5,283.3 661.5,277.4 661.5,301.3 639.0,294.9 639.0,320.5 618.0,314.6 618.0,338.5 608.0,335.6 608.0,347.0 608.0,579.0 859.5,363.0" fill="url(#gr)"/>
<linearGradient id="gsh2" gradientUnits="userSpaceOnUse" x1="859.5" y1="132" x2="973" y2="264"><stop offset="0" stop-color="#000" stop-opacity="0"/><stop offset="0.35" stop-color="#000" stop-opacity="0.08"/><stop offset="0.86" stop-color="#000" stop-opacity="0.12"/><stop offset="1" stop-color="#000" stop-opacity="0.42"/></linearGradient>
<polygon points="859.5,132.0 849.0,129.0 849.0,141.0 829.5,135.5 829.5,157.6 808.5,151.7 808.5,175.6 789.0,170.1 789.0,192.3 768.0,186.4 768.0,210.2 747.0,204.3 747.0,228.2 726.0,222.3 726.0,246.1 703.5,239.8 703.5,265.4 682.5,259.5 682.5,283.3 661.5,277.4 661.5,301.3 639.0,294.9 639.0,320.5 618.0,314.6 618.0,338.5 608.0,335.6 608.0,347.0 608.0,579.0 859.5,363.0" fill="url(#gsh2)"/>
<polyline points="622.8,71.5 853.8,136.5 853.8,366.5" fill="none" stroke="#000" stroke-opacity="0.1" stroke-width="1.4"/>
<polyline points="617.5,76.0 848.5,141.0 848.5,371.0" fill="none" stroke="#000" stroke-opacity="0.1" stroke-width="1.4"/>
<polyline points="612.3,80.5 843.3,145.5 843.3,375.5" fill="none" stroke="#000" stroke-opacity="0.14" stroke-width="1.4"/>
<polyline points="607.1,85.0 838.1,150.0 838.1,380.0" fill="none" stroke="#000" stroke-opacity="0.18" stroke-width="1.4"/>
<polyline points="601.9,89.5 832.9,154.5 832.9,384.5" fill="none" stroke="#000" stroke-opacity="0.07" stroke-width="1.4"/>
<polyline points="596.6,94.0 827.6,159.0 827.6,389.0" fill="none" stroke="#000" stroke-opacity="0.07" stroke-width="1.4"/>
<polyline points="591.4,98.5 822.4,163.5 822.4,393.5" fill="none" stroke="#000" stroke-opacity="0.18" stroke-width="1.4"/>
<polyline points="586.2,103.0 817.2,168.0 817.2,398.0" fill="none" stroke="#000" stroke-opacity="0.14" stroke-width="1.4"/>
<polyline points="580.9,107.5 811.9,172.5 811.9,402.5" fill="none" stroke="#000" stroke-opacity="0.1" stroke-width="1.4"/>
<polyline points="575.7,112.0 806.7,177.0 806.7,407.0" fill="none" stroke="#000" stroke-opacity="0.1" stroke-width="1.4"/>
<polyline points="570.5,116.5 801.5,181.5 801.5,411.5" fill="none" stroke="#000" stroke-opacity="0.18" stroke-width="1.4"/>
<polyline points="565.2,121.0 796.2,186.0 796.2,416.0" fill="none" stroke="#000" stroke-opacity="0.18" stroke-width="1.4"/>
<polyline points="560.0,125.5 791.0,190.5 791.0,420.5" fill="none" stroke="#000" stroke-opacity="0.18" stroke-width="1.4"/>
<polyline points="554.8,130.0 785.8,195.0 785.8,425.0" fill="none" stroke="#000" stroke-opacity="0.1" stroke-width="1.4"/>
<polyline points="549.6,134.5 780.6,199.5 780.6,429.5" fill="none" stroke="#000" stroke-opacity="0.1" stroke-width="1.4"/>
<polyline points="544.3,139.0 775.3,204.0 775.3,434.0" fill="none" stroke="#000" stroke-opacity="0.1" stroke-width="1.4"/>
<polyline points="539.1,143.5 770.1,208.5 770.1,438.5" fill="none" stroke="#000" stroke-opacity="0.18" stroke-width="1.4"/>
<polyline points="533.9,148.0 764.9,213.0 764.9,443.0" fill="none" stroke="#000" stroke-opacity="0.07" stroke-width="1.4"/>
<polyline points="528.6,152.5 759.6,217.5 759.6,447.5" fill="none" stroke="#000" stroke-opacity="0.07" stroke-width="1.4"/>
<polyline points="523.4,157.0 754.4,222.0 754.4,452.0" fill="none" stroke="#000" stroke-opacity="0.1" stroke-width="1.4"/>
<polyline points="518.2,161.5 749.2,226.5 749.2,456.5" fill="none" stroke="#000" stroke-opacity="0.07" stroke-width="1.4"/>
<polyline points="513.0,166.0 744.0,231.0 744.0,461.0" fill="none" stroke="#000" stroke-opacity="0.14" stroke-width="1.4"/>
<polyline points="507.7,170.5 738.7,235.5 738.7,465.5" fill="none" stroke="#000" stroke-opacity="0.07" stroke-width="1.4"/>
<polyline points="502.5,175.0 733.5,240.0 733.5,470.0" fill="none" stroke="#000" stroke-opacity="0.14" stroke-width="1.4"/>
<polyline points="497.3,179.5 728.3,244.5 728.3,474.5" fill="none" stroke="#000" stroke-opacity="0.18" stroke-width="1.4"/>
<polyline points="492.0,184.0 723.0,249.0 723.0,479.0" fill="none" stroke="#000" stroke-opacity="0.18" stroke-width="1.4"/>
<polyline points="486.8,188.5 717.8,253.5 717.8,483.5" fill="none" stroke="#000" stroke-opacity="0.18" stroke-width="1.4"/>
<polyline points="481.6,193.0 712.6,258.0 712.6,488.0" fill="none" stroke="#000" stroke-opacity="0.18" stroke-width="1.4"/>
<polyline points="476.4,197.5 707.4,262.5 707.4,492.5" fill="none" stroke="#000" stroke-opacity="0.18" stroke-width="1.4"/>
<polyline points="471.1,202.0 702.1,267.0 702.1,497.0" fill="none" stroke="#000" stroke-opacity="0.1" stroke-width="1.4"/>
<polyline points="465.9,206.5 696.9,271.5 696.9,501.5" fill="none" stroke="#000" stroke-opacity="0.14" stroke-width="1.4"/>
<polyline points="460.7,211.0 691.7,276.0 691.7,506.0" fill="none" stroke="#000" stroke-opacity="0.07" stroke-width="1.4"/>
<polyline points="455.4,215.5 686.4,280.5 686.4,510.5" fill="none" stroke="#000" stroke-opacity="0.07" stroke-width="1.4"/>
<polyline points="450.2,220.0 681.2,285.0 681.2,515.0" fill="none" stroke="#000" stroke-opacity="0.1" stroke-width="1.4"/>
<polyline points="445.0,224.5 676.0,289.5 676.0,519.5" fill="none" stroke="#000" stroke-opacity="0.18" stroke-width="1.4"/>
<polyline points="439.8,229.0 670.8,294.0 670.8,524.0" fill="none" stroke="#000" stroke-opacity="0.1" stroke-width="1.4"/>
<polyline points="434.5,233.5 665.5,298.5 665.5,528.5" fill="none" stroke="#000" stroke-opacity="0.14" stroke-width="1.4"/>
<polyline points="429.3,238.0 660.3,303.0 660.3,533.0" fill="none" stroke="#000" stroke-opacity="0.18" stroke-width="1.4"/>
<polyline points="424.1,242.5 655.1,307.5 655.1,537.5" fill="none" stroke="#000" stroke-opacity="0.14" stroke-width="1.4"/>
<polyline points="418.8,247.0 649.8,312.0 649.8,542.0" fill="none" stroke="#000" stroke-opacity="0.18" stroke-width="1.4"/>
<polyline points="413.6,251.5 644.6,316.5 644.6,546.5" fill="none" stroke="#000" stroke-opacity="0.18" stroke-width="1.4"/>
<polyline points="408.4,256.0 639.4,321.0 639.4,551.0" fill="none" stroke="#000" stroke-opacity="0.14" stroke-width="1.4"/>
<polyline points="403.1,260.5 634.1,325.5 634.1,555.5" fill="none" stroke="#000" stroke-opacity="0.18" stroke-width="1.4"/>
<polyline points="397.9,265.0 628.9,330.0 628.9,560.0" fill="none" stroke="#000" stroke-opacity="0.1" stroke-width="1.4"/>
<polyline points="392.7,269.5 623.7,334.5 623.7,564.5" fill="none" stroke="#000" stroke-opacity="0.14" stroke-width="1.4"/>
<polyline points="387.5,274.0 618.5,339.0 618.5,569.0" fill="none" stroke="#000" stroke-opacity="0.07" stroke-width="1.4"/>
<polyline points="382.2,278.5 613.2,343.5 613.2,573.5" fill="none" stroke="#000" stroke-opacity="0.14" stroke-width="1.4"/>
<path d="M657.7 88.7 l6.5 1.8" stroke="#000" stroke-opacity="0.32" stroke-width="1" stroke-dasharray="1.3 1.1" fill="none"/>
<path d="M657.7 91.5 l6.5 1.8" stroke="#000" stroke-opacity="0.32" stroke-width="1" stroke-dasharray="1.3 1.1" fill="none"/>
<path d="M641.2 101.7 l6.5 1.8" stroke="#000" stroke-opacity="0.32" stroke-width="1" stroke-dasharray="1.3 1.1" fill="none"/>
<path d="M641.2 104.5 l6.5 1.8" stroke="#000" stroke-opacity="0.32" stroke-width="1" stroke-dasharray="1.3 1.1" fill="none"/>
<path d="M632.0 114.2 l6.5 1.8" stroke="#000" stroke-opacity="0.32" stroke-width="1" stroke-dasharray="1.3 1.1" fill="none"/>
<path d="M632.0 117.0 l6.5 1.8" stroke="#000" stroke-opacity="0.32" stroke-width="1" stroke-dasharray="1.3 1.1" fill="none"/>
<path d="M622.6 124.6 l6.5 1.8" stroke="#000" stroke-opacity="0.32" stroke-width="1" stroke-dasharray="1.3 1.1" fill="none"/>
<path d="M622.6 127.4 l6.5 1.8" stroke="#000" stroke-opacity="0.32" stroke-width="1" stroke-dasharray="1.3 1.1" fill="none"/>
<path d="M607.8 136.1 l6.5 1.8" stroke="#000" stroke-opacity="0.32" stroke-width="1" stroke-dasharray="1.3 1.1" fill="none"/>
<path d="M607.8 138.9 l6.5 1.8" stroke="#000" stroke-opacity="0.32" stroke-width="1" stroke-dasharray="1.3 1.1" fill="none"/>
<path d="M589.1 146.7 l6.5 1.8" stroke="#000" stroke-opacity="0.32" stroke-width="1" stroke-dasharray="1.3 1.1" fill="none"/>
<path d="M589.1 149.5 l6.5 1.8" stroke="#000" stroke-opacity="0.32" stroke-width="1" stroke-dasharray="1.3 1.1" fill="none"/>
<path d="M583.7 163.0 l6.5 1.8" stroke="#000" stroke-opacity="0.32" stroke-width="1" stroke-dasharray="1.3 1.1" fill="none"/>
<path d="M583.7 165.8 l6.5 1.8" stroke="#000" stroke-opacity="0.32" stroke-width="1" stroke-dasharray="1.3 1.1" fill="none"/>
<path d="M563.1 171.3 l6.5 1.8" stroke="#000" stroke-opacity="0.32" stroke-width="1" stroke-dasharray="1.3 1.1" fill="none"/>
<path d="M563.1 174.1 l6.5 1.8" stroke="#000" stroke-opacity="0.32" stroke-width="1" stroke-dasharray="1.3 1.1" fill="none"/>
<path d="M556.8 188.1 l6.5 1.8" stroke="#000" stroke-opacity="0.32" stroke-width="1" stroke-dasharray="1.3 1.1" fill="none"/>
<path d="M556.8 190.9 l6.5 1.8" stroke="#000" stroke-opacity="0.32" stroke-width="1" stroke-dasharray="1.3 1.1" fill="none"/>
<path d="M535.6 197.7 l6.5 1.8" stroke="#000" stroke-opacity="0.32" stroke-width="1" stroke-dasharray="1.3 1.1" fill="none"/>
<path d="M535.6 200.5 l6.5 1.8" stroke="#000" stroke-opacity="0.32" stroke-width="1" stroke-dasharray="1.3 1.1" fill="none"/>
<path d="M492.5 230.3 l6.5 1.8" stroke="#000" stroke-opacity="0.32" stroke-width="1" stroke-dasharray="1.3 1.1" fill="none"/>
<path d="M492.5 233.1 l6.5 1.8" stroke="#000" stroke-opacity="0.32" stroke-width="1" stroke-dasharray="1.3 1.1" fill="none"/>
<path d="M487.5 245.6 l6.5 1.8" stroke="#000" stroke-opacity="0.32" stroke-width="1" stroke-dasharray="1.3 1.1" fill="none"/>
<path d="M487.5 248.4 l6.5 1.8" stroke="#000" stroke-opacity="0.32" stroke-width="1" stroke-dasharray="1.3 1.1" fill="none"/>
<path d="M471.1 256.1 l6.5 1.8" stroke="#000" stroke-opacity="0.32" stroke-width="1" stroke-dasharray="1.3 1.1" fill="none"/>
<path d="M471.1 258.9 l6.5 1.8" stroke="#000" stroke-opacity="0.32" stroke-width="1" stroke-dasharray="1.3 1.1" fill="none"/>
<path d="M452.1 269.1 l6.5 1.8" stroke="#000" stroke-opacity="0.32" stroke-width="1" stroke-dasharray="1.3 1.1" fill="none"/>
<path d="M452.1 271.9 l6.5 1.8" stroke="#000" stroke-opacity="0.32" stroke-width="1" stroke-dasharray="1.3 1.1" fill="none"/>
<path d="M701.8 107.3 l6.5 1.8" stroke="#000" stroke-opacity="0.32" stroke-width="1" stroke-dasharray="1.3 1.1" fill="none"/>
<path d="M701.8 110.1 l6.5 1.8" stroke="#000" stroke-opacity="0.32" stroke-width="1" stroke-dasharray="1.3 1.1" fill="none"/>
<path d="M695.9 122.2 l6.5 1.8" stroke="#000" stroke-opacity="0.32" stroke-width="1" stroke-dasharray="1.3 1.1" fill="none"/>
<path d="M695.9 125.0 l6.5 1.8" stroke="#000" stroke-opacity="0.32" stroke-width="1" stroke-dasharray="1.3 1.1" fill="none"/>
<path d="M675.9 133.7 l6.5 1.8" stroke="#000" stroke-opacity="0.32" stroke-width="1" stroke-dasharray="1.3 1.1" fill="none"/>
<path d="M675.9 136.5 l6.5 1.8" stroke="#000" stroke-opacity="0.32" stroke-width="1" stroke-dasharray="1.3 1.1" fill="none"/>
<path d="M663.2 146.8 l6.5 1.8" stroke="#000" stroke-opacity="0.32" stroke-width="1" stroke-dasharray="1.3 1.1" fill="none"/>
<path d="M663.2 149.6 l6.5 1.8" stroke="#000" stroke-opacity="0.32" stroke-width="1" stroke-dasharray="1.3 1.1" fill="none"/>
<path d="M655.6 158.7 l6.5 1.8" stroke="#000" stroke-opacity="0.32" stroke-width="1" stroke-dasharray="1.3 1.1" fill="none"/>
<path d="M655.6 161.5 l6.5 1.8" stroke="#000" stroke-opacity="0.32" stroke-width="1" stroke-dasharray="1.3 1.1" fill="none"/>
<path d="M632.1 170.2 l6.5 1.8" stroke="#000" stroke-opacity="0.32" stroke-width="1" stroke-dasharray="1.3 1.1" fill="none"/>
<path d="M632.1 173.0 l6.5 1.8" stroke="#000" stroke-opacity="0.32" stroke-width="1" stroke-dasharray="1.3 1.1" fill="none"/>
<path d="M622.8 182.6 l6.5 1.8" stroke="#000" stroke-opacity="0.32" stroke-width="1" stroke-dasharray="1.3 1.1" fill="none"/>
<path d="M622.8 185.4 l6.5 1.8" stroke="#000" stroke-opacity="0.32" stroke-width="1" stroke-dasharray="1.3 1.1" fill="none"/>
<path d="M610.4 196.6 l6.5 1.8" stroke="#000" stroke-opacity="0.32" stroke-width="1" stroke-dasharray="1.3 1.1" fill="none"/>
<path d="M610.4 199.4 l6.5 1.8" stroke="#000" stroke-opacity="0.32" stroke-width="1" stroke-dasharray="1.3 1.1" fill="none"/>
<path d="M603.0 206.9 l6.5 1.8" stroke="#000" stroke-opacity="0.32" stroke-width="1" stroke-dasharray="1.3 1.1" fill="none"/>
<path d="M603.0 209.7 l6.5 1.8" stroke="#000" stroke-opacity="0.32" stroke-width="1" stroke-dasharray="1.3 1.1" fill="none"/>
<path d="M561.5 229.5 l6.5 1.8" stroke="#000" stroke-opacity="0.32" stroke-width="1" stroke-dasharray="1.3 1.1" fill="none"/>
<path d="M561.5 232.3 l6.5 1.8" stroke="#000" stroke-opacity="0.32" stroke-width="1" stroke-dasharray="1.3 1.1" fill="none"/>
<path d="M547.5 239.8 l6.5 1.8" stroke="#000" stroke-opacity="0.32" stroke-width="1" stroke-dasharray="1.3 1.1" fill="none"/>
<path d="M547.5 242.6 l6.5 1.8" stroke="#000" stroke-opacity="0.32" stroke-width="1" stroke-dasharray="1.3 1.1" fill="none"/>
<path d="M542.9 255.3 l6.5 1.8" stroke="#000" stroke-opacity="0.32" stroke-width="1" stroke-dasharray="1.3 1.1" fill="none"/>
<path d="M542.9 258.1 l6.5 1.8" stroke="#000" stroke-opacity="0.32" stroke-width="1" stroke-dasharray="1.3 1.1" fill="none"/>
<path d="M531.1 267.2 l6.5 1.8" stroke="#000" stroke-opacity="0.32" stroke-width="1" stroke-dasharray="1.3 1.1" fill="none"/>
<path d="M531.1 270.0 l6.5 1.8" stroke="#000" stroke-opacity="0.32" stroke-width="1" stroke-dasharray="1.3 1.1" fill="none"/>
<path d="M516.1 277.2 l6.5 1.8" stroke="#000" stroke-opacity="0.32" stroke-width="1" stroke-dasharray="1.3 1.1" fill="none"/>
<path d="M516.1 280.0 l6.5 1.8" stroke="#000" stroke-opacity="0.32" stroke-width="1" stroke-dasharray="1.3 1.1" fill="none"/>
<path d="M499.3 289.9 l6.5 1.8" stroke="#000" stroke-opacity="0.32" stroke-width="1" stroke-dasharray="1.3 1.1" fill="none"/>
<path d="M499.3 292.7 l6.5 1.8" stroke="#000" stroke-opacity="0.32" stroke-width="1" stroke-dasharray="1.3 1.1" fill="none"/>
<path d="M760.8 120.7 l6.5 1.8" stroke="#000" stroke-opacity="0.32" stroke-width="1" stroke-dasharray="1.3 1.1" fill="none"/>
<path d="M760.8 123.5 l6.5 1.8" stroke="#000" stroke-opacity="0.32" stroke-width="1" stroke-dasharray="1.3 1.1" fill="none"/>
<path d="M745.0 129.9 l6.5 1.8" stroke="#000" stroke-opacity="0.32" stroke-width="1" stroke-dasharray="1.3 1.1" fill="none"/>
<path d="M745.0 132.7 l6.5 1.8" stroke="#000" stroke-opacity="0.32" stroke-width="1" stroke-dasharray="1.3 1.1" fill="none"/>
<path d="M733.7 140.1 l6.5 1.8" stroke="#000" stroke-opacity="0.32" stroke-width="1" stroke-dasharray="1.3 1.1" fill="none"/>
<path d="M733.7 142.9 l6.5 1.8" stroke="#000" stroke-opacity="0.32" stroke-width="1" stroke-dasharray="1.3 1.1" fill="none"/>
<path d="M721.0 155.6 l6.5 1.8" stroke="#000" stroke-opacity="0.32" stroke-width="1" stroke-dasharray="1.3 1.1" fill="none"/>
<path d="M721.0 158.4 l6.5 1.8" stroke="#000" stroke-opacity="0.32" stroke-width="1" stroke-dasharray="1.3 1.1" fill="none"/>
<path d="M696.5 165.5 l6.5 1.8" stroke="#000" stroke-opacity="0.32" stroke-width="1" stroke-dasharray="1.3 1.1" fill="none"/>
<path d="M696.5 168.3 l6.5 1.8" stroke="#000" stroke-opacity="0.32" stroke-width="1" stroke-dasharray="1.3 1.1" fill="none"/>
<path d="M690.2 177.0 l6.5 1.8" stroke="#000" stroke-opacity="0.32" stroke-width="1" stroke-dasharray="1.3 1.1" fill="none"/>
<path d="M690.2 179.8 l6.5 1.8" stroke="#000" stroke-opacity="0.32" stroke-width="1" stroke-dasharray="1.3 1.1" fill="none"/>
<path d="M675.4 186.5 l6.5 1.8" stroke="#000" stroke-opacity="0.32" stroke-width="1" stroke-dasharray="1.3 1.1" fill="none"/>
<path d="M675.4 189.3 l6.5 1.8" stroke="#000" stroke-opacity="0.32" stroke-width="1" stroke-dasharray="1.3 1.1" fill="none"/>
<path d="M656.1 197.7 l6.5 1.8" stroke="#000" stroke-opacity="0.32" stroke-width="1" stroke-dasharray="1.3 1.1" fill="none"/>
<path d="M656.1 200.5 l6.5 1.8" stroke="#000" stroke-opacity="0.32" stroke-width="1" stroke-dasharray="1.3 1.1" fill="none"/>
<path d="M624.0 237.2 l6.5 1.8" stroke="#000" stroke-opacity="0.32" stroke-width="1" stroke-dasharray="1.3 1.1" fill="none"/>
<path d="M624.0 240.0 l6.5 1.8" stroke="#000" stroke-opacity="0.32" stroke-width="1" stroke-dasharray="1.3 1.1" fill="none"/>
<path d="M605.9 246.1 l6.5 1.8" stroke="#000" stroke-opacity="0.32" stroke-width="1" stroke-dasharray="1.3 1.1" fill="none"/>
<path d="M605.9 248.9 l6.5 1.8" stroke="#000" stroke-opacity="0.32" stroke-width="1" stroke-dasharray="1.3 1.1" fill="none"/>
<path d="M595.8 261.7 l6.5 1.8" stroke="#000" stroke-opacity="0.32" stroke-width="1" stroke-dasharray="1.3 1.1" fill="none"/>
<path d="M595.8 264.5 l6.5 1.8" stroke="#000" stroke-opacity="0.32" stroke-width="1" stroke-dasharray="1.3 1.1" fill="none"/>
<path d="M580.3 274.7 l6.5 1.8" stroke="#000" stroke-opacity="0.32" stroke-width="1" stroke-dasharray="1.3 1.1" fill="none"/>
<path d="M580.3 277.5 l6.5 1.8" stroke="#000" stroke-opacity="0.32" stroke-width="1" stroke-dasharray="1.3 1.1" fill="none"/>
<path d="M563.0 282.5 l6.5 1.8" stroke="#000" stroke-opacity="0.32" stroke-width="1" stroke-dasharray="1.3 1.1" fill="none"/>
<path d="M563.0 285.3 l6.5 1.8" stroke="#000" stroke-opacity="0.32" stroke-width="1" stroke-dasharray="1.3 1.1" fill="none"/>
<path d="M555.3 296.5 l6.5 1.8" stroke="#000" stroke-opacity="0.32" stroke-width="1" stroke-dasharray="1.3 1.1" fill="none"/>
<path d="M555.3 299.3 l6.5 1.8" stroke="#000" stroke-opacity="0.32" stroke-width="1" stroke-dasharray="1.3 1.1" fill="none"/>
<path d="M786.1 131.6 l6.5 1.8" stroke="#000" stroke-opacity="0.32" stroke-width="1" stroke-dasharray="1.3 1.1" fill="none"/>
<path d="M786.1 134.4 l6.5 1.8" stroke="#000" stroke-opacity="0.32" stroke-width="1" stroke-dasharray="1.3 1.1" fill="none"/>
<path d="M772.7 144.0 l6.5 1.8" stroke="#000" stroke-opacity="0.32" stroke-width="1" stroke-dasharray="1.3 1.1" fill="none"/>
<path d="M772.7 146.8 l6.5 1.8" stroke="#000" stroke-opacity="0.32" stroke-width="1" stroke-dasharray="1.3 1.1" fill="none"/>
<path d="M762.6 158.4 l6.5 1.8" stroke="#000" stroke-opacity="0.32" stroke-width="1" stroke-dasharray="1.3 1.1" fill="none"/>
<path d="M762.6 161.2 l6.5 1.8" stroke="#000" stroke-opacity="0.32" stroke-width="1" stroke-dasharray="1.3 1.1" fill="none"/>
<path d="M741.8 167.0 l6.5 1.8" stroke="#000" stroke-opacity="0.32" stroke-width="1" stroke-dasharray="1.3 1.1" fill="none"/>
<path d="M741.8 169.8 l6.5 1.8" stroke="#000" stroke-opacity="0.32" stroke-width="1" stroke-dasharray="1.3 1.1" fill="none"/>
<path d="M732.2 181.0 l6.5 1.8" stroke="#000" stroke-opacity="0.32" stroke-width="1" stroke-dasharray="1.3 1.1" fill="none"/>
<path d="M732.2 183.8 l6.5 1.8" stroke="#000" stroke-opacity="0.32" stroke-width="1" stroke-dasharray="1.3 1.1" fill="none"/>
<path d="M725.8 195.8 l6.5 1.8" stroke="#000" stroke-opacity="0.32" stroke-width="1" stroke-dasharray="1.3 1.1" fill="none"/>
<path d="M725.8 198.6 l6.5 1.8" stroke="#000" stroke-opacity="0.32" stroke-width="1" stroke-dasharray="1.3 1.1" fill="none"/>
<path d="M705.3 206.5 l6.5 1.8" stroke="#000" stroke-opacity="0.32" stroke-width="1" stroke-dasharray="1.3 1.1" fill="none"/>
<path d="M705.3 209.3 l6.5 1.8" stroke="#000" stroke-opacity="0.32" stroke-width="1" stroke-dasharray="1.3 1.1" fill="none"/>
<path d="M686.2 229.0 l6.5 1.8" stroke="#000" stroke-opacity="0.32" stroke-width="1" stroke-dasharray="1.3 1.1" fill="none"/>
<path d="M686.2 231.8 l6.5 1.8" stroke="#000" stroke-opacity="0.32" stroke-width="1" stroke-dasharray="1.3 1.1" fill="none"/>
<path d="M668.4 243.9 l6.5 1.8" stroke="#000" stroke-opacity="0.32" stroke-width="1" stroke-dasharray="1.3 1.1" fill="none"/>
<path d="M668.4 246.7 l6.5 1.8" stroke="#000" stroke-opacity="0.32" stroke-width="1" stroke-dasharray="1.3 1.1" fill="none"/>
<path d="M647.8 254.0 l6.5 1.8" stroke="#000" stroke-opacity="0.32" stroke-width="1" stroke-dasharray="1.3 1.1" fill="none"/>
<path d="M647.8 256.8 l6.5 1.8" stroke="#000" stroke-opacity="0.32" stroke-width="1" stroke-dasharray="1.3 1.1" fill="none"/>
<path d="M632.0 263.0 l6.5 1.8" stroke="#000" stroke-opacity="0.32" stroke-width="1" stroke-dasharray="1.3 1.1" fill="none"/>
<path d="M632.0 265.8 l6.5 1.8" stroke="#000" stroke-opacity="0.32" stroke-width="1" stroke-dasharray="1.3 1.1" fill="none"/>
<path d="M616.5 275.8 l6.5 1.8" stroke="#000" stroke-opacity="0.32" stroke-width="1" stroke-dasharray="1.3 1.1" fill="none"/>
<path d="M616.5 278.6 l6.5 1.8" stroke="#000" stroke-opacity="0.32" stroke-width="1" stroke-dasharray="1.3 1.1" fill="none"/>
<path d="M607.5 285.8 l6.5 1.8" stroke="#000" stroke-opacity="0.32" stroke-width="1" stroke-dasharray="1.3 1.1" fill="none"/>
<path d="M607.5 288.6 l6.5 1.8" stroke="#000" stroke-opacity="0.32" stroke-width="1" stroke-dasharray="1.3 1.1" fill="none"/>
<path d="M595.1 298.6 l6.5 1.8" stroke="#000" stroke-opacity="0.32" stroke-width="1" stroke-dasharray="1.3 1.1" fill="none"/>
<path d="M595.1 301.4 l6.5 1.8" stroke="#000" stroke-opacity="0.32" stroke-width="1" stroke-dasharray="1.3 1.1" fill="none"/>
<path d="M577.1 308.7 l6.5 1.8" stroke="#000" stroke-opacity="0.32" stroke-width="1" stroke-dasharray="1.3 1.1" fill="none"/>
<path d="M577.1 311.5 l6.5 1.8" stroke="#000" stroke-opacity="0.32" stroke-width="1" stroke-dasharray="1.3 1.1" fill="none"/>
<linearGradient id="gbr" x1="0" y1="0" x2="0" y2="1"><stop offset="0" stop-color="#0a36b8"/><stop offset="0.8" stop-color="#0a34ac"/><stop offset="1" stop-color="#061c70"/></linearGradient>
<polygon points="377.0,283.0 395.0,268.0 455.0,290.0 617.0,335.0 617.0,571.0 608.0,579.0 377.0,512.0" fill="#0a30cc"/>
<polygon points="523.6,337.0 534.0,328.0 534.0,558.8 518.4,572.0" fill="url(#gbr)"/>
<polygon points="608.0,347.0 617.0,342.0 617.0,571.0 608.0,579.0" fill="url(#gbr)"/>
<polygon points="377.0,283.0 435.0,299.0 435.0,528.5 377.0,512.0" fill="#0a32b0"/>
<polygon points="534.0,328.0 608.0,347.0 608.0,579.0 534.0,558.8" fill="#0a34aa"/>
<polygon points="435.0,310.0 523.6,337.4 518.4,572.0 435.0,548.0" fill="#0000bc"/>
<polygon points="435.0,314.0 519.0,339.5 514.5,572.0 435.0,549.0" fill="#0000a2"/>
</g>
<rect x="394.5" y="170.5" width="483" height="311" fill="none" stroke="#4a4a4a" stroke-width="1"/>
<rect x="435" y="229.4" width="20" height="7.8" fill="#ff0000" stroke="#000" stroke-width="1"/>
<rect x="435" y="237.2" width="20" height="15.9" fill="#ff4c00" stroke="#000" stroke-width="1"/>
<rect x="435" y="253.1" width="20" height="15.9" fill="#ff9800" stroke="#000" stroke-width="1"/>
<rect x="435" y="269.0" width="20" height="15.9" fill="#ffe600" stroke="#000" stroke-width="1"/>
<rect x="435" y="285.0" width="20" height="15.9" fill="#ccff00" stroke="#000" stroke-width="1"/>
<rect x="435" y="300.9" width="20" height="15.9" fill="#80ff00" stroke="#000" stroke-width="1"/>
<rect x="435" y="316.8" width="20" height="15.9" fill="#33ff00" stroke="#000" stroke-width="1"/>
<rect x="435" y="332.7" width="20" height="15.9" fill="#00ff33" stroke="#000" stroke-width="1"/>
<rect x="435" y="348.6" width="20" height="15.9" fill="#00ff99" stroke="#000" stroke-width="1"/>
<rect x="435" y="364.5" width="20" height="15.9" fill="#00ffcc" stroke="#000" stroke-width="1"/>
<rect x="435" y="380.5" width="20" height="15.9" fill="#00e6ff" stroke="#000" stroke-width="1"/>
<rect x="435" y="396.4" width="20" height="15.9" fill="#0099ff" stroke="#000" stroke-width="1"/>
<rect x="435" y="412.3" width="20" height="15.9" fill="#004cff" stroke="#000" stroke-width="1"/>
<rect x="435" y="428.2" width="20" height="7.9" fill="#0000ff" stroke="#000" stroke-width="1"/>
<text x="460" y="245.2" font-family="Liberation Sans" font-size="13" fill="#111" stroke="#111" stroke-width="0.25" textLength="28.5" lengthAdjust="spacing">-0.62</text>
<text x="460" y="261.1" font-family="Liberation Sans" font-size="13" fill="#111" stroke="#111" stroke-width="0.25" textLength="36" lengthAdjust="spacing">-0.625</text>
<text x="460" y="277.0" font-family="Liberation Sans" font-size="13" fill="#111" stroke="#111" stroke-width="0.25" textLength="28.5" lengthAdjust="spacing">-0.63</text>
<text x="460" y="293.0" font-family="Liberation Sans" font-size="13" fill="#111" stroke="#111" stroke-width="0.25" textLength="36" lengthAdjust="spacing">-0.635</text>
<text x="460" y="308.9" font-family="Liberation Sans" font-size="13" fill="#111" stroke="#111" stroke-width="0.25" textLength="28.5" lengthAdjust="spacing">-0.64</text>
<text x="460" y="324.8" font-family="Liberation Sans" font-size="13" fill="#111" stroke="#111" stroke-width="0.25" textLength="36" lengthAdjust="spacing">-0.645</text>
<text x="460" y="340.7" font-family="Liberation Sans" font-size="13" fill="#111" stroke="#111" stroke-width="0.25" textLength="28.5" lengthAdjust="spacing">-0.65</text>
<text x="460" y="356.6" font-family="Liberation Sans" font-size="13" fill="#111" stroke="#111" stroke-width="0.25" textLength="36" lengthAdjust="spacing">-0.655</text>
<text x="460" y="372.5" font-family="Liberation Sans" font-size="13" fill="#111" stroke="#111" stroke-width="0.25" textLength="28.5" lengthAdjust="spacing">-0.66</text>
<text x="460" y="388.5" font-family="Liberation Sans" font-size="13" fill="#111" stroke="#111" stroke-width="0.25" textLength="36" lengthAdjust="spacing">-0.665</text>
<text x="460" y="404.4" font-family="Liberation Sans" font-size="13" fill="#111" stroke="#111" stroke-width="0.25" textLength="28.5" lengthAdjust="spacing">-0.67</text>
<text x="460" y="420.3" font-family="Liberation Sans" font-size="13" fill="#111" stroke="#111" stroke-width="0.25" textLength="36" lengthAdjust="spacing">-0.675</text>
<text x="460" y="436.2" font-family="Liberation Sans" font-size="13" fill="#111" stroke="#111" stroke-width="0.25" textLength="28.5" lengthAdjust="spacing">-0.68</text>
<text x="435.5" y="221.5" font-family="Liberation Sans" font-size="12.3" fill="#111" stroke="#111" stroke-width="0.15" textLength="400" lengthAdjust="spacing">angular-coordinate Dataset:UNKNOWN [angular-coordinate].N 1 1 0</text>
<line x1="818.2" y1="98" x2="818.2" y2="133" stroke="#000" stroke-width="2"/>
<line x1="831" y1="148" x2="864" y2="158" stroke="#000" stroke-width="2"/>
<line x1="811" y1="151" x2="791" y2="167" stroke="#000" stroke-width="2"/>
<polygon points="810.4,138.3 818.2,131.7 830.9,134.1 824.2,142.3" fill="#d8d8d8" stroke="#333" stroke-width="0.6"/>
<polygon points="810.4,138.3 824.2,142.3 824.2,154.6 810.4,151.4" fill="#bdbdbd" stroke="#333" stroke-width="0.6"/>
<polygon points="824.2,142.3 830.9,134.1 830.9,149.5 824.2,154.6" fill="#a8a8a8" stroke="#333" stroke-width="0.6"/>
<text x="812.5" y="93" font-family="Liberation Sans" font-size="12" fill="#000">Z</text>
<text x="868" y="165" font-family="Liberation Sans" font-size="12" fill="#000">Y</text>
<text x="780" y="177" font-family="Liberation Sans" font-size="12" fill="#000">X</text>
</svg>
</body></html>
